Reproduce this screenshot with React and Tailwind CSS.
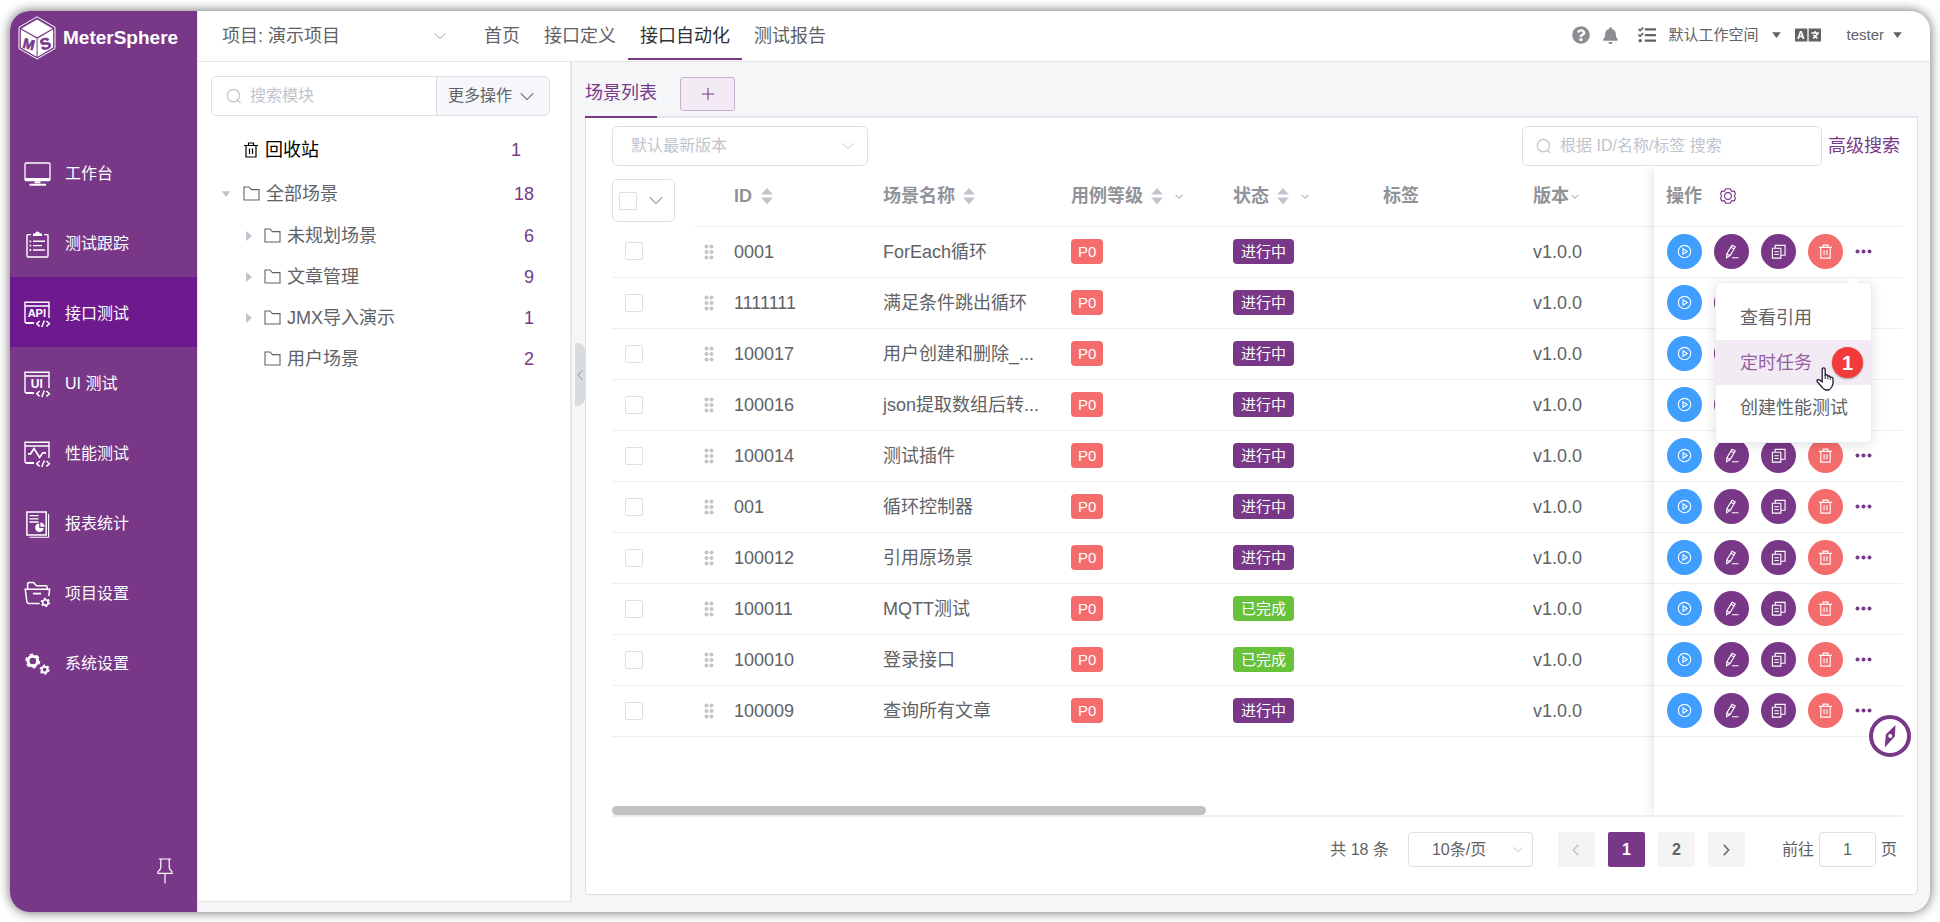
import React from "react";
import { FaQuestionCircle, FaBell, FaTasks, FaLanguage } from "react-icons/fa";

const Svg = ({ className = "", box = "0 0 16 16", children, ...rest }) => (
  <svg viewBox={box} className={className} fill="none" stroke="currentColor" strokeWidth="1.2" aria-hidden="true" {...rest}>
    {children}
  </svg>
);

const Chevron = ({ className = "", stroke = 1.2 }) => (
  <Svg className={className} box="0 0 16 10" strokeWidth={stroke}>
    <path d="M1 1.5 8 8.5 15 1.5" />
  </Svg>
);

const SideChevron = ({ className = "", flip = false, stroke = 1.6 }) => (
  <Svg className={className} box="0 0 10 16" strokeWidth={stroke}>
    <path d={flip ? "M2 1 8.5 8 2 15" : "M8 1 1.5 8 8 15"} />
  </Svg>
);

const Caret = ({ className = "" }) => (
  <svg viewBox="0 0 10 7" className={className} fill="currentColor" aria-hidden="true">
    <path d="M0 0.3h10L5 7z" />
  </svg>
);

const SearchIcon = ({ className = "" }) => (
  <Svg className={className}>
    <circle cx="7.4" cy="7.6" r="6.2" />
    <path d="M11.2 12.6 14.6 14.8" />
  </Svg>
);

const Folder = ({ className = "" }) => (
  <Svg className={className} box="0 0 17 15" strokeWidth="1.1">
    <path d="M1 1h5l2.4 2.6H16V14H1z" />
  </Svg>
);

const Sort = () => (
  <svg viewBox="0 0 12 20" className="h-5 w-3 text-[#c0c4cc]" fill="currentColor" aria-hidden="true">
    <path d="M6 2 11.8 8.5H.2zM6 18.5 11.8 11.5H.2z" />
  </svg>
);

const logoText = { fontFamily: "Liberation Sans, Arial, sans-serif", fontWeight: 700, fontSize: 16, fill: "#783887", stroke: "#783887", strokeWidth: 0.6, textAnchor: "middle" };

const Logo = () => (
  <svg viewBox="0 0 38 44" className="h-11 w-[38px]" aria-hidden="true">
    <path d="M19 .8 37 11.2V32.6L19 43 1 32.6V11.2z" fill="none" stroke="#fff" strokeWidth="1" />
    <path d="M19 3.4 34.6 12.4 19 21.2 3.4 12.4z" fill="#fff" />
    <path d="M2.9 13.6 18.6 22.4V40.8L2.9 31.6z" fill="#fff" />
    <path d="M35.1 13.6 19.6 22.4V40.8L35.1 31.6z" fill="#fff" />
    <text x="11" y="33" transform="rotate(14 11 28)" {...logoText} fontSize={14}>M</text>
    <text x="27.5" y="33.5" transform="rotate(-16 27 28)" {...logoText}>S</text>
  </svg>
);

const WindowFrame = ({ children }) => (
  <Svg box="0 0 27 27" className="size-[27px]" strokeWidth="1.4">
    <path d="M9.5 22H2.5Q1 22 1 20.5V1.2h24V17M1 5h24" />
    <path d="M2 22h8" strokeWidth="2" />
    <path d="M15.6 20 12.8 22.8 15.6 25.4M22.4 20 25.4 22.8 22.4 25.4M20.3 19.6 17.8 26" strokeWidth="1.5" />
    {children}
  </Svg>
);

const frameText = { fontFamily: "Liberation Sans, Arial, sans-serif", fontWeight: 700, fontSize: 11, fill: "currentColor", stroke: "none", textAnchor: "middle" };

const gear = (cx, cy, r, w) => (
  <>
    <circle cx={cx} cy={cy} r={r} strokeWidth={w} />
    <circle cx={cx} cy={cy} r={r + w / 2 + 0.3} strokeWidth="1.8" strokeDasharray={`${((r + w / 2 + 0.3) * Math.PI) / 6} ${((r + w / 2 + 0.3) * Math.PI) / 6}`} />
  </>
);

const icons = {
  monitor: (
    <Svg box="0 0 27 27" className="size-[27px]" strokeWidth="1.3">
      <rect x="1" y="2" width="25" height="17.5" rx="1" />
      <path d="M1 18.2h25" strokeWidth="2.6" />
      <path d="M10.5 21.3h6M5.5 23.8h16.5" strokeWidth="1.9" />
    </Svg>
  ),
  clipboard: (
    <Svg box="0 0 27 27" className="size-[27px]" strokeWidth="1.4">
      <path d="M7 3.6H4Q3 3.6 3 4.6V25q0 1 1 1h19q1 0 1-1V4.6q0-1-1-1h-3" />
      <path d="M9 5V2.4h2.2Q11.5.4 13.5.4t2.3 2H18V5z" fill="currentColor" stroke="none" />
      <path d="M9 10.3h12M9 14.6h9M9 19h12" />
      <path d="M5.6 10.3h1.6M5.6 14.6h1.6M5.6 19h1.6" strokeWidth="1.8" />
    </Svg>
  ),
  api: (
    <WindowFrame>
      <text x="12.8" y="16" {...frameText}>API</text>
    </WindowFrame>
  ),
  ui: (
    <WindowFrame>
      <text x="12.8" y="17" {...frameText} fontSize="12">UI</text>
    </WindowFrame>
  ),
  perf: (
    <WindowFrame>
      <path d="M4 12.8h2.6L10 7.6l5.6 8.8 3.2-4.6H22" strokeWidth="1.7" />
    </WindowFrame>
  ),
  report: (
    <Svg box="0 0 27 27" className="size-[27px]" strokeWidth="1.5">
      <path d="M2.9 1h19.3v23H2.9z" />
      <path d="M24.6 3v23.2H5.5" strokeWidth="1.1" />
      <path d="M5.5 4.6h9M5.5 7.8h9M5.5 11h9" strokeWidth="1.3" />
      <path d="M15.2 12.6A4.2 4.2 0 1 0 19.6 17h-4.4z" fill="currentColor" stroke="none" />
      <path d="M16.4 11.6v4.2h4.2A4.2 4.2 0 0 0 16.4 11.6z" fill="currentColor" stroke="none" />
    </Svg>
  ),
  project: (
    <Svg box="0 0 27 27" className="size-[27px]" strokeWidth="1.5">
      <path d="M3.6 8V2.8Q3.6 1.4 5 1.4h4.6l2.8 3.4h9.2q1.6 0 1.6 1.6V8" />
      <path d="M15.6 22.4H4.6Q3.2 22.4 3 21L1.2 8.2h24.4L24.8 15" />
      <path d="M9 12.6h8" strokeWidth="1.8" />
      {gear(21.4, 21.4, 2.7, 1.6)}
    </Svg>
  ),
  gears: (
    <Svg box="0 0 27 27" className="size-[27px]">
      {gear(8.8, 10, 4.8, 3)}
      {gear(20.6, 18.6, 2.9, 2)}
    </Svg>
  ),
};

const navItems = [
  ["工作台", "monitor"],
  ["测试跟踪", "clipboard"],
  ["接口测试", "api"],
  ["UI 测试", "ui"],
  ["性能测试", "perf"],
  ["报表统计", "report"],
  ["项目设置", "project"],
  ["系统设置", "gears"],
];

const Sidebar = () => (
  <aside className="flex w-[187px] shrink-0 flex-col bg-[#783887] text-white">
    <a href="#home" className="flex items-center gap-[7px] pt-[5px] pl-2">
      <Logo />
      <span className="text-[19px] leading-6 font-bold">MeterSphere</span>
    </a>
    <nav className="mt-[77px]">
      {navItems.map(([label, icon]) => (
        <a
          key={label}
          href={`#${icon}`}
          className={`flex h-[70px] items-center gap-[14px] pt-1 pl-[14px] text-base ${icon === "api" ? "bg-[#6f198f]" : ""}`}
        >
          {icons[icon]}
          <span>{label}</span>
        </a>
      ))}
    </nav>
    <button type="button" aria-label="固定菜单" className="mt-auto mr-6 mb-7 self-end">
      <Svg box="0 0 16 26" className="h-[26px] w-4" strokeWidth="1.2">
        <path d="M1.8 1h12.4M3.8 1v8.4Q3.8 11 1 13.6V15.4h14V13.6Q12.2 11 12.2 9.4V1M8 15.4V25.6" />
      </Svg>
    </button>
  </aside>
);

const topTabs = ["首页", "接口定义", "接口自动化", "测试报告"];

const Header = () => (
  <header className="flex h-[51px] shrink-0 items-center border-b border-[#e6e6e6] bg-white text-[#606266]">
    <button type="button" className="ml-6 flex w-[224px] items-center justify-between text-lg leading-6">
      <span>项目: 演示项目</span>
      <Chevron className="h-2 w-3 text-[#909399]" />
    </button>
    <nav className="ml-[26px] flex h-full text-lg">
      {topTabs.map((t) => (
        <a
          key={t}
          href={`#${t}`}
          className={`flex h-[49px] items-center border-b-2 px-3 pt-0.5 ${
            t === "接口自动化" ? "border-[#783887] text-[#303133]" : "border-transparent"
          }`}
        >
          {t}
        </a>
      ))}
    </nav>
    <div className="mr-7 mb-0.5 ml-auto flex items-center text-[15px] leading-6">
      <FaQuestionCircle className="size-[18px] text-[#8b8d92]" />
      <FaBell className="ml-3 size-[17px] text-[#8b8d92]" />
      <FaTasks className="ml-[19px] size-[18px]" />
      <button type="button" className="ml-3 flex items-center gap-[14px]">
        默认工作空间
        <Caret className="h-1.5 w-[9px]" />
      </button>
      <FaLanguage className="ml-[14px] size-[26px]" />
      <button type="button" className="ml-[25px] flex items-center gap-[9px]">
        tester
        <Caret className="h-1.5 w-[9px]" />
      </button>
    </div>
  </header>
);

const treeNodes = [
  ["未规划场景", 6, true],
  ["文章管理", 9, true],
  ["JMX导入演示", 1, true],
  ["用户场景", 2, false],
];

const ModulePanel = () => (
  <section className="mb-[10px] w-[374px] shrink-0 border-r-2 border-b border-[#e6e6e6] bg-white text-lg text-[#606266]">
    <div className="mt-[14px] ml-[13px] flex h-10 w-[339px] overflow-hidden rounded-[5px] border border-[#dcdfe6] text-base">
      <label className="flex min-w-0 flex-1 items-center gap-2 pl-[14px]">
        <SearchIcon className="size-4 shrink-0 text-[#c0c4cc]" />
        <input aria-label="搜索模块" placeholder="搜索模块" className="w-full min-w-0 outline-none placeholder:text-[#c0c4cc]" />
      </label>
      <button type="button" className="flex w-[113px] items-center gap-2 border-l border-[#dcdfe6] bg-[#f5f7fa] pl-[11px]">
        更多操作
        <Chevron className="h-[9px] w-[14px]" />
      </button>
    </div>
    <a href="#trash" className="mt-3 flex h-11 items-center pr-[49px] pl-[45px] text-black">
      <Svg className="mr-[6px] size-4" strokeWidth="1.2">
        <path d="M1 3.5h14M3 3.5V15h10V3.5M5.5 3V1h5v2M6.5 6.5v5.5M9.5 6.5v5.5" />
      </Svg>
      <span className="flex-1">回收站</span>
      <span className="text-[#783887]">1</span>
    </a>
    <div className="flex h-[43px] items-center pr-9 pl-[23px]">
      <Caret className="mr-3 h-1.5 w-[10px] text-[#c0c4cc]" />
      <Folder className="mr-[6px] h-[15px] w-[17px]" />
      <span className="flex-1">全部场景</span>
      <span className="text-[#783887]">18</span>
    </div>
    <ul>
      {treeNodes.map(([name, count, open]) => (
        <li key={name} className="flex h-[41px] items-center pr-9 pl-[48px]">
          <svg viewBox="0 0 6 10" className={`mr-3 h-[10px] w-1.5 text-[#c0c4cc] ${open ? "" : "invisible"}`} fill="currentColor" aria-hidden="true">
            <path d="M0 0 6 5 0 10z" />
          </svg>
          <Folder className="mr-[6px] h-[15px] w-[17px]" />
          <span className="flex-1">{name}</span>
          <span className="text-[#783887]">{count}</span>
        </li>
      ))}
    </ul>
  </section>
);

const rows = [
  ["0001", "ForEach循环", false],
  ["1111111", "满足条件跳出循环", false],
  ["100017", "用户创建和删除_...", false],
  ["100016", "json提取数组后转...", false],
  ["100014", "测试插件", false],
  ["001", "循环控制器", false],
  ["100012", "引用原场景", false],
  ["100011", "MQTT测试", true],
  ["100010", "登录接口", true],
  ["100009", "查询所有文章", false],
];

const Check = ({ label, className = "" }) => (
  <input type="checkbox" aria-label={label} className={`block size-[18px] appearance-none rounded-xs border border-[#dcdfe6] bg-white checked:bg-[#783887] ${className}`} />
);

const Drag = () => (
  <svg viewBox="0 0 10 16" className="h-4 w-[10px] text-[#c4c4c6]" fill="currentColor" aria-hidden="true">
    {[2.4, 8, 13.6].map((y) => (
      <React.Fragment key={y}>
        <circle cx="2.5" cy={y} r="2" />
        <circle cx="7.5" cy={y} r="2" />
      </React.Fragment>
    ))}
  </svg>
);

const actions = [
  ["执行", "bg-[#409eff]", <><circle cx="8" cy="8" r="6.6" /><path d="M6.4 5v6L11 8z" /></>],
  ["编辑", "bg-[#783887]", <path d="M8.6 1.4 12 3.2 6.5 12.4 2.8 14.6 3 10.6zM7.4 3.4 10.8 5.4M3 10.6 6.5 12.4M8.5 14.6H15.5" />],
  ["复制", "bg-[#783887]", <><path d="M1.5 4.5h9V15h-9zM4.5 4.5V1.5H15V12h-4.5" /><path d="M3.6 8.2h4.8M3.6 11.2h4.8" /></>],
  ["删除", "bg-[#f56c6c]", <path d="M1 3.6h14M3 3.6V15h10V3.6M5.4 3.4V1.2h5.2v2.2M6.5 6.6v5.4M9.5 6.6v5.4" />],
];

const MoreMenu = () => (
  <div className="absolute top-[48px] right-0 z-20 w-[157px] rounded-[5px] border border-[#ebeef5] bg-white py-3 shadow-[0_2px_12px_rgba(0,0,0,0.12)]">
    <svg viewBox="0 0 14 8" className="absolute -top-[7px] right-[11px] h-2 w-[14px]" aria-hidden="true">
      <path d="M0 8 7 1 14 8z" fill="#fff" />
    </svg>
    <ul role="menu" className="text-lg text-[#606266]">
      <li role="menuitem" className="flex h-[45px] items-center pl-6">查看引用</li>
      <li role="menuitem" className="relative flex h-[45px] items-center bg-[#f2ebf3] pl-6 text-[#9360a0]">
        定时任务
        <span className="absolute top-[7px] right-[8px] flex size-[31px] items-center justify-center rounded-full bg-[#f23a3a] text-xl leading-5 font-bold text-white shadow-[0_1px_2px_rgba(0,0,0,0.35)]">
          1
        </span>
        <svg viewBox="0 0 18 24" className="absolute top-[27px] right-[37px] h-6 w-[18px]" aria-hidden="true">
          <path
            d="M6.2 14.8V2.6q0-1.8 1.5-1.8t1.5 1.8V8q2.4-.6 2.6 1 2.3-.5 2.5 1.2 2.7-.4 2.7 2V16q0 2-1.3 4t-3 3H9.600q-2-.4-3.700-3L1.200 14.600q-.6-1.400.6-1.900t2.400.7z"
            fill="#fff"
            stroke="#1a1a2e"
            strokeWidth="1.3"
          />
          <path d="M9.2 8v4M11.8 9v3.2M14.3 10.4v2.2" stroke="#1a1a2e" strokeWidth="1" />
        </svg>
      </li>
      <li role="menuitem" className="flex h-[45px] items-center pl-6">创建性能测试</li>
    </ul>
  </div>
);

const ScenarioTable = () => (
  <table className="w-full table-fixed border-collapse text-left text-lg leading-6 text-[#606266]">
    <colgroup>
      <col className="w-[83px]" />
      <col className="w-[26px]" />
      <col className="w-[149px]" />
      <col className="w-[188px]" />
      <col className="w-[162px]" />
      <col className="w-[150px]" />
      <col className="w-[150px]" />
      <col />
      <col className="w-[249px]" />
    </colgroup>
    <thead>
      <tr className="h-[59px] text-[#909399] [&>th]:p-0 [&>th:not(:first-child)]:border-b [&>th]:border-[#ebeef5]">
        <th>
          <div className="mt-2 flex h-[43px] w-[63px] items-center gap-3 rounded-[5px] border border-[#dcdfe6] pl-[6px]">
            <Check label="全选" />
            <Chevron className="h-[9px] w-[14px]" />
          </div>
        </th>
        <th />
        <th><div className="flex items-center gap-[9px] pl-[13px]">ID<Sort /></div></th>
        <th><div className="flex items-center gap-2 pl-[13px]">场景名称<Sort /></div></th>
        <th><div className="flex items-center gap-2 pl-[13px]">用例等级<Sort /><Chevron className="ml-1 h-[5px] w-2" stroke={2} /></div></th>
        <th><div className="flex items-center gap-2 pl-[13px]">状态<Sort /><Chevron className="ml-1 h-[5px] w-2" stroke={2} /></div></th>
        <th><div className="pl-[13px]">标签</div></th>
        <th><div className="flex items-center gap-[2px] pl-[13px]">版本<Chevron className="h-[5px] w-2" stroke={2} /></div></th>
        <th>
          <div className="flex items-center gap-[18px] pl-3">
            操作
            <button type="button" aria-label="列设置" className="text-[#783887]">
              <Svg className="size-4" strokeWidth="1.1" strokeLinejoin="round">
                <path d="M5.6.8h4.8l.7 2 1.1.6 2.100-.4L15.500 6 14.200 8l1.300 2-1.200 3-2.100-.4-1.100.6-.7 2H5.600l-.7-2-1.100-.6-2.100.4L.5 10l1.300-2L.5 6l1.200-3 2.100.4 1.100-.6z" />
                <circle cx="8" cy="8" r="3.4" />
              </Svg>
            </button>
          </div>
        </th>
      </tr>
    </thead>
    <tbody>
      {rows.map(([id, name, done], i) => (
        <tr key={id} className="h-[51px] [&>td]:border-b [&>td]:border-[#ebeef5] [&>td]:p-0">
          <td><Check label={`选择 ${id}`} className="ml-[13px]" /></td>
          <td><div className="pl-[9px]"><Drag /></div></td>
          <td><div className="pl-[13px]">{id}</div></td>
          <td><div className="truncate pl-[13px]">{name}</div></td>
          <td>
            <div className="flex pl-[13px]">
              <span className="rounded-sm bg-[#f56c6c] px-[7px] text-[15px] leading-[25px] text-white">P0</span>
            </div>
          </td>
          <td>
            <div className="flex pl-[13px]">
              <span className={`rounded-sm px-2 text-[15px] leading-[25px] text-white ${done ? "bg-[#67c23a]" : "bg-[#783887]"}`}>
                {done ? "已完成" : "进行中"}
              </span>
            </div>
          </td>
          <td />
          <td><div className="pl-[13px]">v1.0.0</div></td>
          <td>
            <div className="flex items-center gap-3 pl-[13px]">
              {actions.map(([label, bg, glyph]) => (
                <button key={label} type="button" aria-label={label} className={`flex size-[35px] items-center justify-center rounded-full text-white ${bg}`}>
                  <Svg className="size-[15px]">{glyph}</Svg>
                </button>
              ))}
              <div className="relative flex h-[35px] items-center">
                <button type="button" aria-label="更多" className="text-[#783887]">
                  <svg viewBox="0 0 17 5" className="h-[5px] w-[17px]" fill="currentColor" aria-hidden="true">
                    <circle cx="2.5" cy="2.5" r="2" /><circle cx="8.5" cy="2.5" r="2" /><circle cx="14.5" cy="2.5" r="2" />
                  </svg>
                </button>
                {i === 0 && <MoreMenu />}
              </div>
            </div>
          </td>
        </tr>
      ))}
    </tbody>
  </table>
);

const pageBtn = "flex h-[35px] w-[37px] items-center justify-center rounded-xs";

const Pagination = () => (
  <footer className="flex items-center justify-end pt-[15px] pr-[6px] pb-[27px] text-base leading-6 text-[#606266]">
    <span className="mr-[19px]">共 18 条</span>
    <div className="relative mr-[25px]">
      <select aria-label="每页条数" className="block h-[35px] w-[125px] appearance-none rounded-sm border border-[#dcdfe6] bg-white pl-[23px]">
        <option>10条/页</option>
      </select>
      <Chevron className="pointer-events-none absolute top-[14px] right-[10px] h-[7px] w-[10px] text-[#c0c4cc]" stroke={1.6} />
    </div>
    <nav className="flex gap-[13px] font-bold">
      <button type="button" aria-label="上一页" className={`${pageBtn} bg-[#f4f4f5] text-[#c0c4cc]`}><SideChevron className="h-3 w-2" stroke={2} /></button>
      <button type="button" className={`${pageBtn} bg-[#783887] text-white`}>1</button>
      <button type="button" className={`${pageBtn} bg-[#f4f4f5]`}>2</button>
      <button type="button" aria-label="下一页" className={`${pageBtn} bg-[#f4f4f5]`}><SideChevron flip stroke={2} className="h-3 w-2" /></button>
    </nav>
    <label className="ml-[37px] flex items-center gap-[5px]">
      前往
      <input defaultValue="1" aria-label="页码" className="h-[35px] w-[57px] rounded-sm border border-[#dcdfe6] text-center outline-none" />
      页
    </label>
  </footer>
);

export default function App() {
  return (
    <div className="flex min-h-screen bg-white p-[10px] pt-[11px] font-['Liberation_Sans','Noto_Sans_CJK_SC',sans-serif]">
      <div className="relative flex min-w-0 flex-1 overflow-hidden rounded-[20px] bg-[#f5f6f8] shadow-[0_0_12px_rgba(0,0,0,0.6)]">
        <Sidebar />
        <div className="flex min-w-0 flex-1 flex-col border-l border-[#e6e6e6]">
          <Header />
          <div className="flex min-h-0 flex-1">
            <ModulePanel />
            <main className="relative flex min-w-0 flex-1 flex-col pr-3 pb-[17px] pl-[13px]">
              <button type="button" aria-label="收起" className="absolute top-[281px] left-[3px] flex h-[63px] w-[10px] items-center justify-center rounded-r-lg bg-[#d8dcdf] text-[#909399]">
                <SideChevron className="h-3 w-[7px]" stroke={1.3} />
              </button>
              <div className="flex h-14 items-stretch border-b-2 border-[#e4e7ed]">
                <a href="#list" className="-mb-[2px] flex items-center border-b-2 border-[#783887] pt-2 text-lg text-[#783887]">场景列表</a>
                <button type="button" aria-label="新增" className="mt-[15px] ml-[23px] flex h-[34px] w-[55px] items-center justify-center rounded-[3px] border border-[#c9afcf] bg-[#f2ebf3] text-[#783887]">
                  <Svg className="size-[14px]"><path d="M8 1v14M1 8h14" /></Svg>
                </button>
              </div>
              <div className="flex flex-1 flex-col rounded-b-[5px] border border-t-0 border-[#dcdfe6] bg-white pt-2 pr-[14px] pl-[26px]">
                <div className="mb-px flex items-center justify-between pr-[3px]">
                  <div className="relative">
                    <select aria-label="版本" className="block h-10 w-64 appearance-none rounded-[5px] border border-[#dcdfe6] bg-white pl-[18px] text-base text-[#c0c4cc]">
                      <option>默认最新版本</option>
                    </select>
                    <Chevron className="pointer-events-none absolute top-4 right-[13px] h-2 w-[14px] text-[#c0c4cc]" />
                  </div>
                  <div className="flex items-center gap-[6px]">
                    <label className="flex h-10 w-[300px] items-center gap-2 rounded-[5px] border border-[#dcdfe6] pl-[13px] text-base">
                      <SearchIcon className="size-4 shrink-0 text-[#c0c4cc]" />
                      <input aria-label="搜索场景" placeholder="根据 ID/名称/标签 搜索" className="w-full min-w-0 outline-none placeholder:text-[#c0c4cc]" />
                    </label>
                    <a href="#advanced" className="text-lg leading-6 text-[#783887]">高级搜索</a>
                  </div>
                </div>
                <div className="relative flex flex-1 flex-col overflow-hidden border-b-2 border-[#ebeef5]">
                  <ScenarioTable />
                  <div className="pointer-events-none absolute inset-y-0 right-0 w-[249px] shadow-[0_0_12px_rgba(0,0,0,0.14)] [clip-path:inset(0_0_0_-12px)]" />
                  <div className="mt-auto h-[9px] w-[46%] rounded-full bg-[#c1c1c1]" />
                </div>
                <Pagination />
              </div>
            </main>
          </div>
        </div>
        <button type="button" aria-label="指南" className="absolute right-[19px] bottom-[155px] flex size-[42px] items-center justify-center rounded-full border-4 border-[#783887] bg-white text-[#783887]">
          <svg viewBox="0 0 24 24" className="size-6" fill="currentColor" fillRule="evenodd" aria-hidden="true">
            <path d="M17.5 1 16.8 12.5 6.8 23.5 7.800 10.500zM12.200 10a2 2 0 1 0 .1 4 2 2 0 0 0-.1-4z" />
          </svg>
        </button>
      </div>
    </div>
  );
}
